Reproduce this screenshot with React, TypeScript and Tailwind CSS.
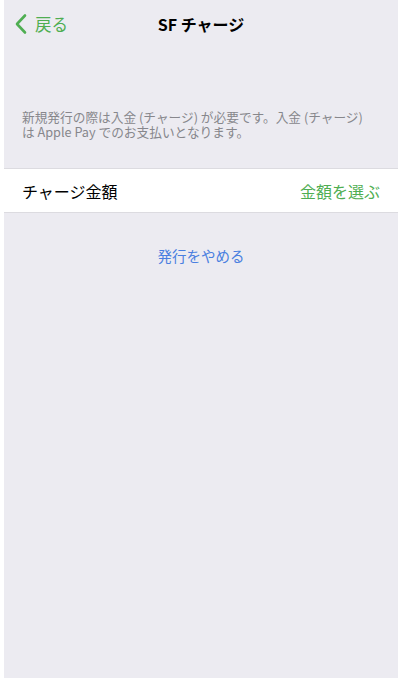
export default function App() {
  const font = { fontFamily: '"Noto Sans CJK JP", "Noto Sans", sans-serif' };
  return (
    <div className="w-[403px] h-[678px] bg-white flex pl-[4px] pr-[5px]" style={font}>
      <div className="flex-1 bg-[#ecebf1] flex flex-col">
        {/* Nav bar */}
        <div className="relative h-[48px] flex items-center">
          <div className="flex items-center pl-[10px] text-[#4fae52]">
            <svg width="14" height="22" viewBox="0 0 14 22" fill="none">
              <path d="M11 2.5 L3 11 L11 19.5" stroke="#4fae52" strokeWidth="2.6" strokeLinecap="round" strokeLinejoin="round" />
            </svg>
            <span className="ml-[7px] text-[16.5px] leading-none">戻る</span>
          </div>
          <div className="absolute inset-x-0 top-0 h-[48px] flex items-center justify-center text-[16px] font-bold text-black leading-none">
            SF チャージ
          </div>
        </div>

        {/* Description */}
        <div className="pt-[61px] px-[18px] text-[12.7px] leading-[15px] text-[#87878c]">
          <p>新規発行の際は入金 (チャージ) が必要です。入金 (チャージ)</p>
          <p>は Apple Pay でのお支払いとなります。</p>
        </div>

        {/* Row */}
        <div className="mt-[29px] h-[45px] bg-white border-y border-[#dcdbe0] flex items-center justify-between px-[18px]">
          <span className="text-[16px] text-black">チャージ金額</span>
          <span className="text-[16px] text-[#4fae52]">金額を選ぶ</span>
        </div>

        {/* Cancel */}
        <div className="mt-[32px] flex justify-center">
          <span className="text-[14.5px] text-[#4a7fe0]">発行をやめる</span>
        </div>
      </div>
    </div>
  );
}
